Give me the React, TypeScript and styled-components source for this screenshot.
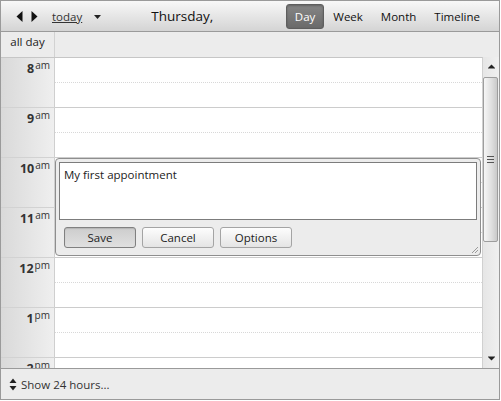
import React from "react";
import styled, { createGlobalStyle, css } from "styled-components";

const GlobalStyle = createGlobalStyle`
  html, body { margin: 0; padding: 0; background: #ffffff; }
  * { box-sizing: border-box; }
`;

const Scheduler = styled.div`
  width: 500px;
  height: 400px;
  border: 1px solid #9a9a9a;
  display: flex;
  flex-direction: column;
  font-family: "Open Sans", "Noto Sans", sans-serif;
  font-size: 11.5px;
  color: #222;
  background: #ececec;
  overflow: hidden;
`;

const Header = styled.div`
  flex: none;
  height: 31px;
  border-bottom: 1px solid #9a9a9a;
  background: linear-gradient(#f8f8f8, #d4d4d4);
  display: flex;
  align-items: center;
  padding-left: 15px;
  padding-right: 10px;
`;

const NavGroup = styled.div`
  display: flex;
  align-items: center;
  gap: 8px;
`;

const TodayLink = styled.span`
  margin-left: 14px;
  text-decoration: underline;
  color: #333;
`;

const DropIcon = styled.svg`
  margin-left: 12px;
  margin-top: 1px;
`;

const Title = styled.div`
  margin-left: 50px;
  font-size: 13.5px;
  color: #111;
`;

const Tabs = styled.div`
  margin-left: auto;
  display: flex;
`;

const Tab = styled.div<{ $active?: boolean }>`
  height: 25px;
  padding: 0 8px;
  display: flex;
  align-items: center;
  border-radius: 3px;
  border: 1px solid transparent;
  color: #111;
  ${(p) =>
    p.$active &&
    css`
      background: linear-gradient(#858585, #6a6a6a);
      border-color: #5e5e5e;
      color: #fff;
      box-shadow: inset 0 1px 2px rgba(0, 0, 0, 0.25);
    `}
`;

const AllDayRow = styled.div`
  flex: none;
  height: 25px;
  display: flex;
  background: #ececec;
`;

const AllDayLabel = styled.div`
  width: 54px;
  border-right: 1px solid #d2d2d2;
  text-align: center;
  padding-top: 2px;
  color: #222;
`;

const Body = styled.div`
  flex: 1;
  display: flex;
  min-height: 0;
`;

const ScrollArea = styled.div`
  flex: 1;
  position: relative;
  overflow: hidden;
  border-top: 1px solid #c6c6c6;
  border-right: 1px solid #d0d0d0;
`;

const HourRow = styled.div`
  display: flex;
  height: 50px;
  flex: none;
`;

const TimeCell = styled.div`
  width: 54px;
  border-right: 1px solid #cfcfcf;
  border-bottom: 1px solid #d2d2d2;
  background: linear-gradient(to right, #d9d9d9, #efefef);
  text-align: right;
  padding-right: 4px;
  padding-top: 2px;
  line-height: 14px;
  color: #333;
`;

const HourNum = styled.span`
  font-weight: 700;
  font-size: 12.5px;
`;

const HourSuffix = styled.span`
  font-size: 10px;
  vertical-align: 4px;
  line-height: 10px;
  margin-left: 1px;
`;

const SlotCell = styled.div`
  flex: 1;
  background: #fff;
  border-bottom: 1px solid #cccccc;
  display: flex;
  flex-direction: column;
`;

const HalfSlot = styled.div<{ $first?: boolean }>`
  height: ${(p) => (p.$first ? 25 : 24)}px;
  ${(p) =>
    p.$first &&
    css`
      border-bottom: 1px dotted #d8d8d8;
    `}
`;

const Editor = styled.div`
  position: absolute;
  top: 100px;
  left: 54px;
  width: 426px;
  height: 98px;
  border: 1px solid #8e8e8e;
  border-radius: 4px;
  background: #ececec;
  padding: 3px 3px 0 3px;
  display: flex;
  flex-direction: column;
`;

const TextBox = styled.textarea`
  width: 100%;
  height: 58px;
  flex: none;
  border: 1px solid #7c7c7c;
  background: #fff;
  resize: none;
  margin: 0;
  padding: 4px 4px;
  font-family: "Open Sans", "Noto Sans", sans-serif;
  font-size: 11.5px;
  line-height: 16px;
  color: #222;
  outline: none;
`;

const ButtonRow = styled.div`
  display: flex;
  gap: 6px;
  margin-top: 7px;
  padding-left: 5px;
`;

const Button = styled.div<{ $pressed?: boolean }>`
  width: 72px;
  height: 21px;
  border-radius: 3px;
  border: 1px solid #a4a4a4;
  background: linear-gradient(#fdfdfd, #e4e4e4);
  display: flex;
  align-items: center;
  justify-content: center;
  color: #222;
  ${(p) =>
    p.$pressed &&
    css`
      border-color: #808080;
      background: linear-gradient(#cdcdcd, #e0e0e0);
      box-shadow: inset 0 1px 1px rgba(0, 0, 0, 0.12);
    `}
`;

const Grip = styled.svg`
  position: absolute;
  right: 1px;
  bottom: 1px;
`;

const Scrollbar = styled.div`
  width: 16px;
  flex: none;
  display: flex;
  flex-direction: column;
  background: linear-gradient(to right, #e6e6e6, #f0f0f0);
`;

const ArrowButton = styled.div`
  height: 19px;
  flex: none;
  display: flex;
  align-items: center;
  justify-content: center;
`;

const Track = styled.div`
  flex: 1;
  padding-top: 1px;
`;

const Thumb = styled.div`
  height: 165px;
  margin: 0 1px 0 0;
  border: 1px solid #9d9d9d;
  border-radius: 2px;
  background: linear-gradient(to right, #f6f6f6, #dedede 60%, #c9c9c9);
  display: flex;
  align-items: center;
  justify-content: center;
`;

const Footer = styled.div`
  flex: none;
  height: 31px;
  border-top: 1px solid #9a9a9a;
  background: #ececec;
  display: flex;
  align-items: center;
  padding-left: 8px;
  gap: 4px;
  color: #333;
`;

const hours: [string, string][] = [
  ["8", "am"],
  ["9", "am"],
  ["10", "am"],
  ["11", "am"],
  ["12", "pm"],
  ["1", "pm"],
  ["2", "pm"],
];

export default function App() {
  return (
    <>
      <GlobalStyle />
      <Scheduler>
        <Header>
          <NavGroup>
            <svg width="7" height="11" viewBox="0 0 7 11">
              <polygon points="6.5,0 6.5,11 0.5,5.5" fill="#111" />
            </svg>
            <svg width="7" height="11" viewBox="0 0 7 11">
              <polygon points="0.5,0 0.5,11 6.5,5.5" fill="#111" />
            </svg>
          </NavGroup>
          <TodayLink>today</TodayLink>
          <DropIcon width="7" height="4" viewBox="0 0 7 4">
            <polygon points="0,0 7,0 3.5,4" fill="#222" />
          </DropIcon>
          <Title>Thursday,</Title>
          <Tabs>
            <Tab $active>Day</Tab>
            <Tab>Week</Tab>
            <Tab>Month</Tab>
            <Tab>Timeline</Tab>
          </Tabs>
        </Header>
        <AllDayRow>
          <AllDayLabel>all day</AllDayLabel>
        </AllDayRow>
        <Body>
          <ScrollArea>
            {hours.map(([n, s]) => (
              <HourRow key={n + s}>
                <TimeCell>
                  <HourNum>{n}</HourNum>
                  <HourSuffix>{s}</HourSuffix>
                </TimeCell>
                <SlotCell>
                  <HalfSlot $first />
                  <HalfSlot />
                </SlotCell>
              </HourRow>
            ))}
            <Editor>
              <TextBox defaultValue="My first appointment" />
              <ButtonRow>
                <Button $pressed>Save</Button>
                <Button>Cancel</Button>
                <Button>Options</Button>
              </ButtonRow>
              <Grip width="9" height="9" viewBox="0 0 9 9">
                <path d="M8 2 L2 8 M8 5 L5 8" stroke="#9a9a9a" strokeWidth="1" />
              </Grip>
            </Editor>
          </ScrollArea>
          <Scrollbar>
            <ArrowButton>
              <svg width="7" height="5" viewBox="0 0 7 5">
                <polygon points="3.5,0.5 7,4 0,4" fill="#222" />
                <line x1="0" y1="4.5" x2="7" y2="4.5" stroke="#888" strokeWidth="1" />
              </svg>
            </ArrowButton>
            <Track>
              <Thumb>
                <svg width="7" height="9" viewBox="0 0 7 9">
                  <path d="M0 1.5 H7 M0 4.5 H7 M0 7.5 H7" stroke="#555" strokeWidth="1" />
                </svg>
              </Thumb>
            </Track>
            <ArrowButton>
              <svg width="7" height="5" viewBox="0 0 7 5">
                <line x1="0" y1="0.5" x2="7" y2="0.5" stroke="#888" strokeWidth="1" />
                <polygon points="0,1 7,1 3.5,4.5" fill="#222" />
              </svg>
            </ArrowButton>
          </Scrollbar>
        </Body>
        <Footer>
          <svg width="8" height="13" viewBox="0 0 8 13">
            <polygon points="4,0.5 7.5,5 0.5,5" fill="#222" />
            <polygon points="0.5,8 7.5,8 4,12.5" fill="#222" />
          </svg>
          <span>Show 24 hours...</span>
        </Footer>
      </Scheduler>
    </>
  );
}
